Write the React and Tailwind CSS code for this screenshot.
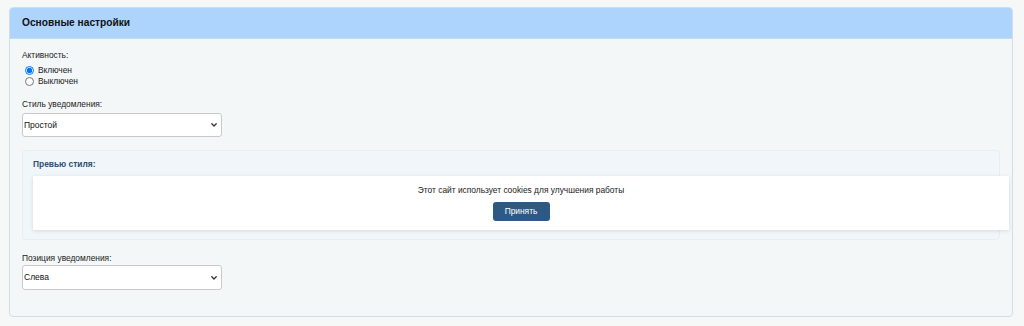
import { useState } from "react";

const Chevron = () => (
  <svg
    className="pointer-events-none absolute right-[5px] top-1/2 -translate-y-1/2"
    width="6"
    height="4"
    viewBox="0 0 6 4"
    fill="none"
    stroke="#333"
    strokeWidth="1.3"
    strokeLinecap="round"
    strokeLinejoin="round"
  >
    <path d="M0.8 0.8L3 3L5.2 0.8" />
  </svg>
);

const Select = ({ value, onChange, options, className = "", height = "h-[24px]" }) => (
  <div className={`relative w-[200px] ${className}`}>
    <select
      className={`block w-full ${height} appearance-none rounded-[3px] border border-[#c9c9c9] bg-white pl-[1px] pr-[14px] text-[8.5px] text-[#111] outline-none`}
      value={value}
      onChange={onChange}
    >
      {options.map((o) => (
        <option key={o.value} value={o.value}>
          {o.label}
        </option>
      ))}
    </select>
    <Chevron />
  </div>
);

export default function App() {
  const [active, setActive] = useState("on");
  const [style, setStyle] = useState("simple");
  const [position, setPosition] = useState("left");

  return (
    <div
      className="min-h-[326px] bg-[#f6f8f8] pt-[7px] pl-[9px] pr-[11px] pb-[10px]"
      style={{ fontFamily: '"Liberation Sans", Arial, sans-serif' }}
    >
      <div className="rounded-[4px] border border-[#cfdfe8] bg-[#f3f7f8] overflow-hidden">
        {/* Header */}
        <div className="h-[31px] bg-[#acd4fd] border-b border-[#c4dcf0] flex items-center px-[12px]">
          <h2 className="text-[10.2px] font-bold text-[#111]">Основные настройки</h2>
        </div>

        <div className="px-[12px] pt-[11px] pb-[26px]">
          {/* Активность */}
          <div className="text-[8.4px] leading-[10px] text-[#1a1a1a]">Активность:</div>
          <div className="mt-[5px] pl-[3px] flex flex-col">
            <label className="flex items-center gap-[4px] h-[11px] text-[8.4px] text-[#1a1a1a]">
              <input
                type="radio"
                name="active"
                className="m-0 w-[9px] h-[9px]"
                checked={active === "on"}
                onChange={() => setActive("on")}
              />
              Включен
            </label>
            <label className="flex items-center gap-[4px] h-[11px] text-[8.4px] text-[#1a1a1a]">
              <input
                type="radio"
                name="active"
                className="m-0 w-[9px] h-[9px]"
                checked={active === "off"}
                onChange={() => setActive("off")}
              />
              Выключен
            </label>
          </div>

          {/* Стиль */}
          <div className="mt-[12px] text-[8.4px] leading-[10px] text-[#1a1a1a]">Стиль уведомления:</div>
          <Select
            className="mt-[4px]"
            value={style}
            onChange={(e) => setStyle(e.target.value)}
            options={[
              { value: "simple", label: "Простой" },
              { value: "modern", label: "Современный" },
            ]}
          />

          {/* Превью */}
          <div className="mt-[13px] rounded-[4px] border border-[#e6edf4] bg-[#f1f6fb] px-[10px] pt-[8px] pb-[9px]">
            <div className="text-[8.4px] leading-[10px] font-bold text-[#2a4f72]">Превью стиля:</div>
            <div className="mt-[7px] mr-[-20px] bg-white shadow-[0_1px_4px_rgba(0,0,0,0.12)] pt-[9px] pb-[9px] flex flex-col items-center">
              <div className="text-[8.4px] leading-[10px] text-[#1a1a1a]">
                Этот сайт использует cookies для улучшения работы
              </div>
              <button className="mt-[7px] h-[19px] w-[57px] rounded-[3px] bg-[#2c5a85] text-white text-[8.4px] leading-[19px]">
                Принять
              </button>
            </div>
          </div>

          {/* Позиция */}
          <div className="mt-[13px] text-[8.4px] leading-[10px] text-[#1a1a1a]">Позиция уведомления:</div>
          <Select
            className="mt-[2px]"
            height="h-[25px]"
            value={position}
            onChange={(e) => setPosition(e.target.value)}
            options={[
              { value: "left", label: "Слева" },
              { value: "right", label: "Справа" },
              { value: "center", label: "По центру" },
            ]}
          />
        </div>
      </div>
    </div>
  );
}
